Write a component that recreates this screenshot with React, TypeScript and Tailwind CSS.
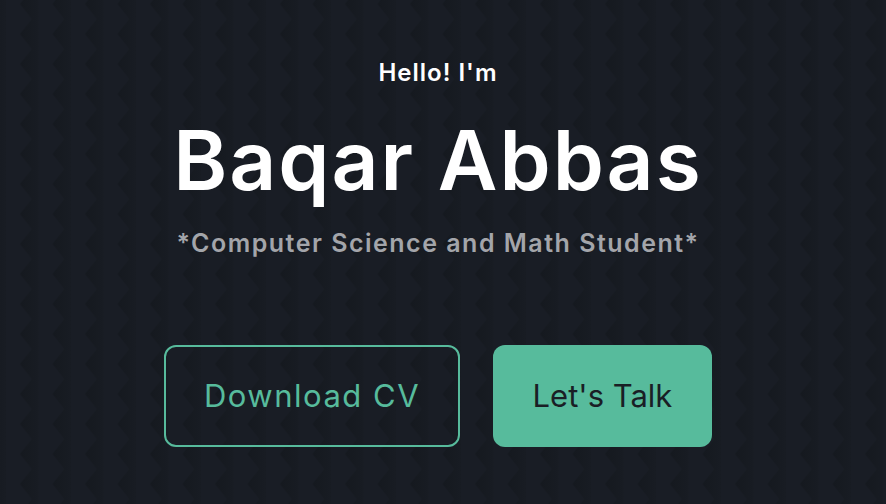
export default function App() {
  return (
    <div
      className="relative w-[886px] h-[504px] bg-[#191d25] overflow-hidden"
      style={{ fontFamily: "Inter, 'Noto Sans', sans-serif" }}
    >
      <svg className="absolute inset-0" width="886" height="504" aria-hidden="true">
        <defs>
          <linearGradient id="zg" x1="0" y1="0" x2="1" y2="0">
            <stop offset="0" stopColor="#15191f" />
            <stop offset="1" stopColor="#181c23" />
          </linearGradient>
          <pattern id="zz" x="6" y="4" width="32.5" height="30" patternUnits="userSpaceOnUse">
            <polygon points="14,0 26,15 14,30 32.5,30 32.5,0" fill="url(#zg)" />
          </pattern>
        </defs>
        <rect width="886" height="504" fill="url(#zz)" />
      </svg>
      <div className="relative flex flex-col items-center pr-[10px]">
        <p className="mt-[56px] text-[24px] leading-[34px] font-semibold text-white tracking-[1px]">Hello! I'm</p>
        <h1 className="mt-[26px] text-[82px] leading-[90px] font-semibold text-white tracking-[2px]">Baqar Abbas</h1>
        <p className="mt-[20px] text-[25px] leading-[34px] font-semibold text-[#a3a5aa] tracking-[1.5px]">
          *Computer Science and Math Student*
        </p>
        <div className="mt-[85px] flex gap-[33px]">
          <button className="w-[296px] h-[102px] rounded-[12px] border-2 border-[#57bb9c] text-[#57bb9c] text-[31px] font-normal tracking-[1.5px]">
            Download CV
          </button>
          <button className="w-[219px] h-[102px] rounded-[12px] bg-[#57bb9c] text-[#1a1e25] text-[31px] font-normal">
            Let's Talk
          </button>
        </div>
      </div>
    </div>
  );
}
